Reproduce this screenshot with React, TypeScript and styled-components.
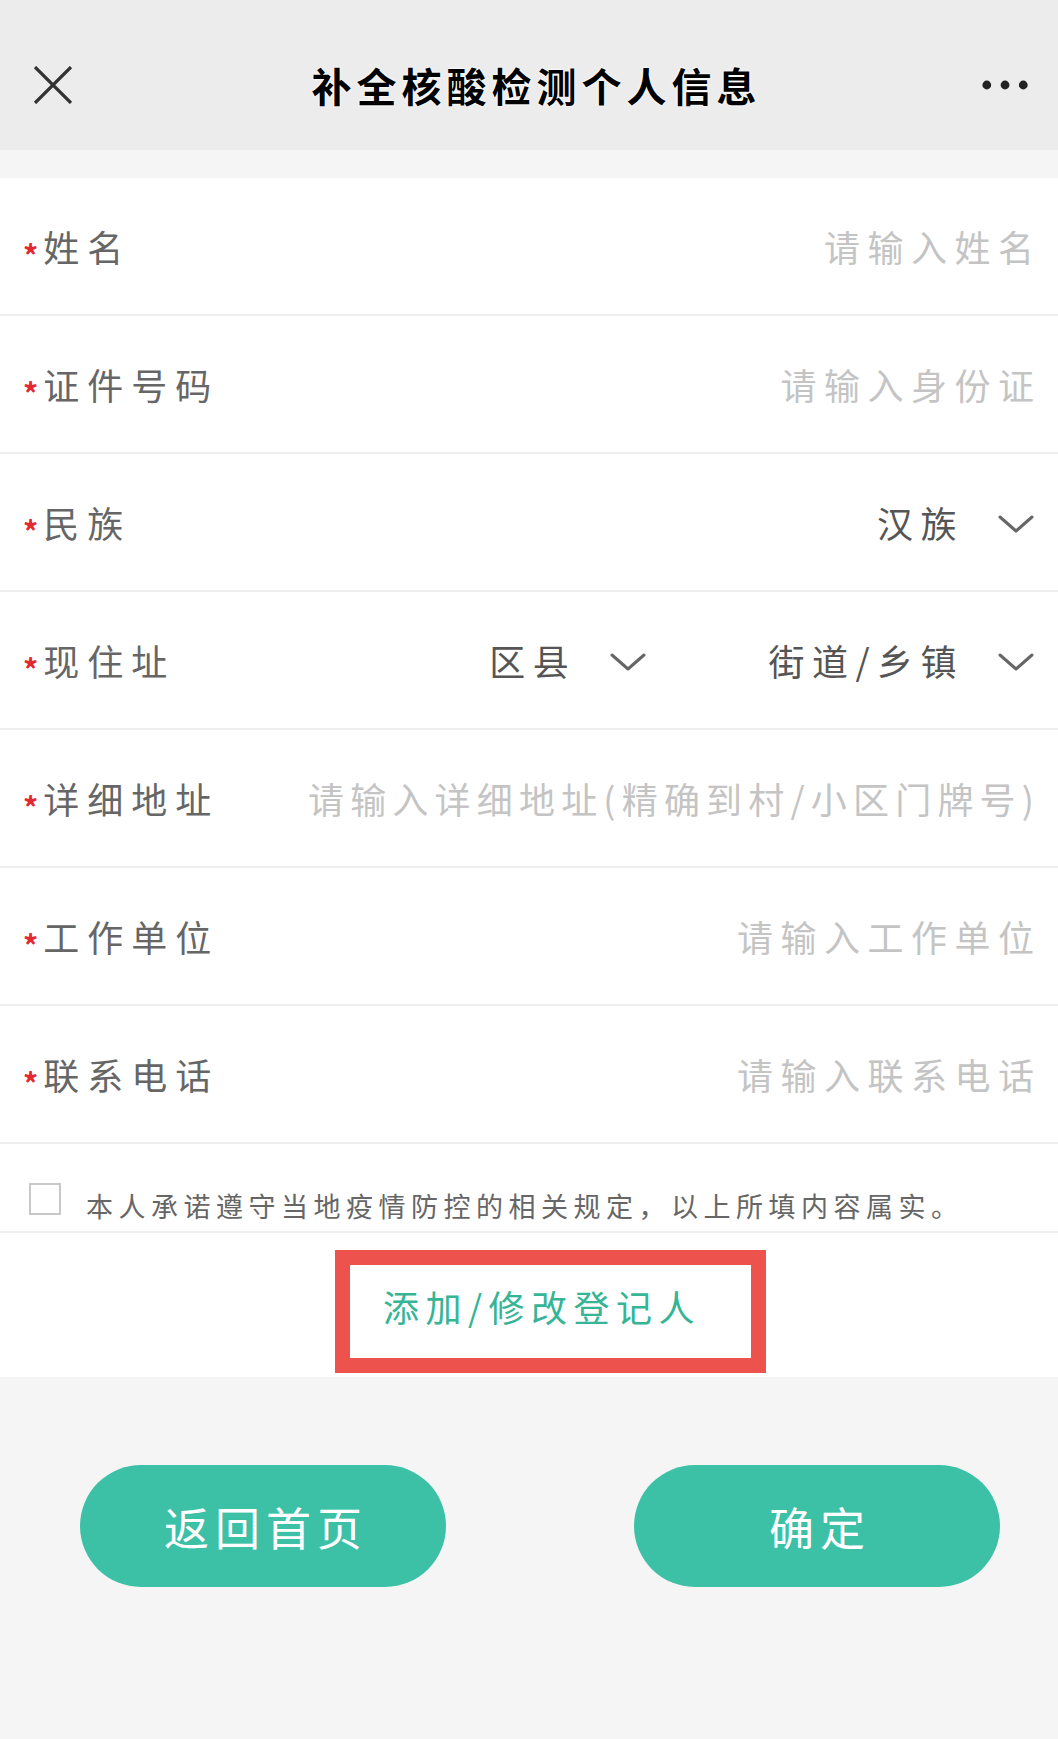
import React from "react";
import styled, { createGlobalStyle } from "styled-components";

const GlobalStyle = createGlobalStyle`
  html, body {
    margin: 0;
    padding: 0;
    background: #f5f5f5;
  }
  body {
    font-family: "Noto Sans CJK SC", "Noto Sans", sans-serif;
  }
  * { box-sizing: border-box; }
`;

const Page = styled.div`
  width: 1058px;
  min-height: 1739px;
  background: #f5f5f5;
  display: flex;
  flex-direction: column;
`;

const Header = styled.header`
  height: 150px;
  background: #ececec;
  display: flex;
  align-items: center;
  justify-content: space-between;
  padding: 20px 28px 0 29px;
`;

const IconButton = styled.div`
  width: 48px;
  height: 40px;
  display: flex;
  align-items: center;
  justify-content: center;
`;

const Title = styled.h1`
  margin: 0 0 0 14px;
  font-size: 40px;
  font-weight: 700;
  letter-spacing: 5px;
  color: #000;
  text-shadow: 0 0 3px #fff, 0 0 2px #fff;
`;

const Spacer = styled.div`
  height: 28px;
  background: #f5f5f5;
`;

const Form = styled.section`
  background: #fff;
  display: flex;
  flex-direction: column;
`;

const Row = styled.div`
  height: 138px;
  display: flex;
  align-items: center;
  border-bottom: 2px solid #eeeeee;
  padding: 0 24px 0 23px;
`;

const Label = styled.div`
  display: flex;
  align-items: center;
  flex-shrink: 0;
  font-size: 36px;
  letter-spacing: 8px;
  color: #666;
`;

const Star = styled.span`
  color: #e4282f;
  font-size: 30px;
  font-weight: 700;
  margin-right: 5px;
  padding-top: 16px;
  letter-spacing: 0;
`;

const Placeholder = styled.div<{ $tight?: boolean }>`
  flex: 1;
  text-align: right;
  font-size: 36px;
  letter-spacing: ${(p) => (p.$tight ? "6.2px" : "7.5px")};
  margin-right: ${(p) => (p.$tight ? "-6.2px" : "-7.5px")};
  color: #c4c4c4;
  white-space: nowrap;
`;

const Selects = styled.div`
  flex: 1;
  display: flex;
  justify-content: flex-end;
  gap: 122px;
`;

const Select = styled.div`
  display: flex;
  align-items: center;
  gap: 34px;
  font-size: 36px;
  letter-spacing: 7.5px;
  color: #555;
`;

const ChevronIcon = styled.svg`
  margin-top: 4px;
`;

const Chevron = () => (
  <ChevronIcon width="36" height="20" viewBox="0 0 36 20" fill="none">
    <path d="M2 3 L18 17 L34 3" stroke="#666" strokeWidth="3" strokeLinecap="round" strokeLinejoin="round" />
  </ChevronIcon>
);

const AgreeRow = styled.label`
  height: 89px;
  display: flex;
  align-items: flex-start;
  gap: 25px;
  padding: 39px 0 0 29px;
  border-bottom: 2px solid #eeeeee;
  background: #fff;
`;

const CheckBox = styled.span`
  width: 32px;
  height: 32px;
  border: 2px solid #c8c8c8;
  background: #fff;
  flex-shrink: 0;
`;

const AgreeText = styled.span`
  font-size: 27px;
  line-height: 40px;
  letter-spacing: 5.5px;
  color: #666;
  margin-top: 3px;
`;

const LinkRow = styled.div`
  height: 144px;
  background: #fff;
  display: flex;
  align-items: flex-end;
  padding: 0 0 4px 335px;
`;

const Highlight = styled.div`
  width: 431px;
  height: 123px;
  border: 15px solid #ee524c;
  display: flex;
  align-items: center;
  padding: 0 0 12px 33px;
`;

const LinkText = styled.span`
  font-size: 36px;
  letter-spacing: 6.5px;
  color: #35b596;
`;

const Footer = styled.div`
  flex: 1;
  display: flex;
  justify-content: space-between;
  align-items: flex-start;
  padding: 88px 58px 0 80px;
`;

const PillButton = styled.button`
  width: 366px;
  height: 122px;
  border: none;
  border-radius: 61px;
  background: #3cc1a7;
  color: #fff;
  font-family: "Noto Sans CJK SC", sans-serif;
  font-size: 45px;
  letter-spacing: 6px;
  padding: 0 0 0 6px;
  cursor: pointer;
`;

type FieldProps = { label: string; placeholder: string; tight?: boolean };

const InputField = ({ label, placeholder, tight }: FieldProps) => (
  <Row>
    <Label>
      <Star>*</Star>
      {label}
    </Label>
    <Placeholder $tight={tight}>{placeholder}</Placeholder>
  </Row>
);

export default function App() {
  return (
    <>
      <GlobalStyle />
      <Page>
        <Header>
          <IconButton>
            <svg width="40" height="38" viewBox="0 0 40 38" fill="none">
              <path d="M2 1 L38 37 M38 1 L2 37" stroke="#333" strokeWidth="3.2" />
            </svg>
          </IconButton>
          <Title>补全核酸检测个人信息</Title>
          <IconButton>
            <svg width="50" height="12" viewBox="0 0 50 12">
              <circle cx="5" cy="6" r="4.6" fill="#222" />
              <circle cx="24" cy="6" r="4.6" fill="#222" />
              <circle cx="43" cy="6" r="4.6" fill="#222" />
            </svg>
          </IconButton>
        </Header>
        <Spacer />
        <Form>
          <InputField label="姓名" placeholder="请输入姓名" />
          <InputField label="证件号码" placeholder="请输入身份证" />
          <Row>
            <Label>
              <Star>*</Star>
              民族
            </Label>
            <Selects>
              <Select>
                汉族
                <Chevron />
              </Select>
            </Selects>
          </Row>
          <Row>
            <Label>
              <Star>*</Star>
              现住址
            </Label>
            <Selects>
              <Select>
                区县
                <Chevron />
              </Select>
              <Select>
                街道/乡镇
                <Chevron />
              </Select>
            </Selects>
          </Row>
          <InputField label="详细地址" placeholder="请输入详细地址(精确到村/小区门牌号)" tight />
          <InputField label="工作单位" placeholder="请输入工作单位" />
          <InputField label="联系电话" placeholder="请输入联系电话" />
          <AgreeRow>
            <CheckBox />
            <AgreeText>本人承诺遵守当地疫情防控的相关规定，以上所填内容属实。</AgreeText>
          </AgreeRow>
          <LinkRow>
            <Highlight>
              <LinkText>添加/修改登记人</LinkText>
            </Highlight>
          </LinkRow>
        </Form>
        <Footer>
          <PillButton>返回首页</PillButton>
          <PillButton>确定</PillButton>
        </Footer>
      </Page>
    </>
  );
}
